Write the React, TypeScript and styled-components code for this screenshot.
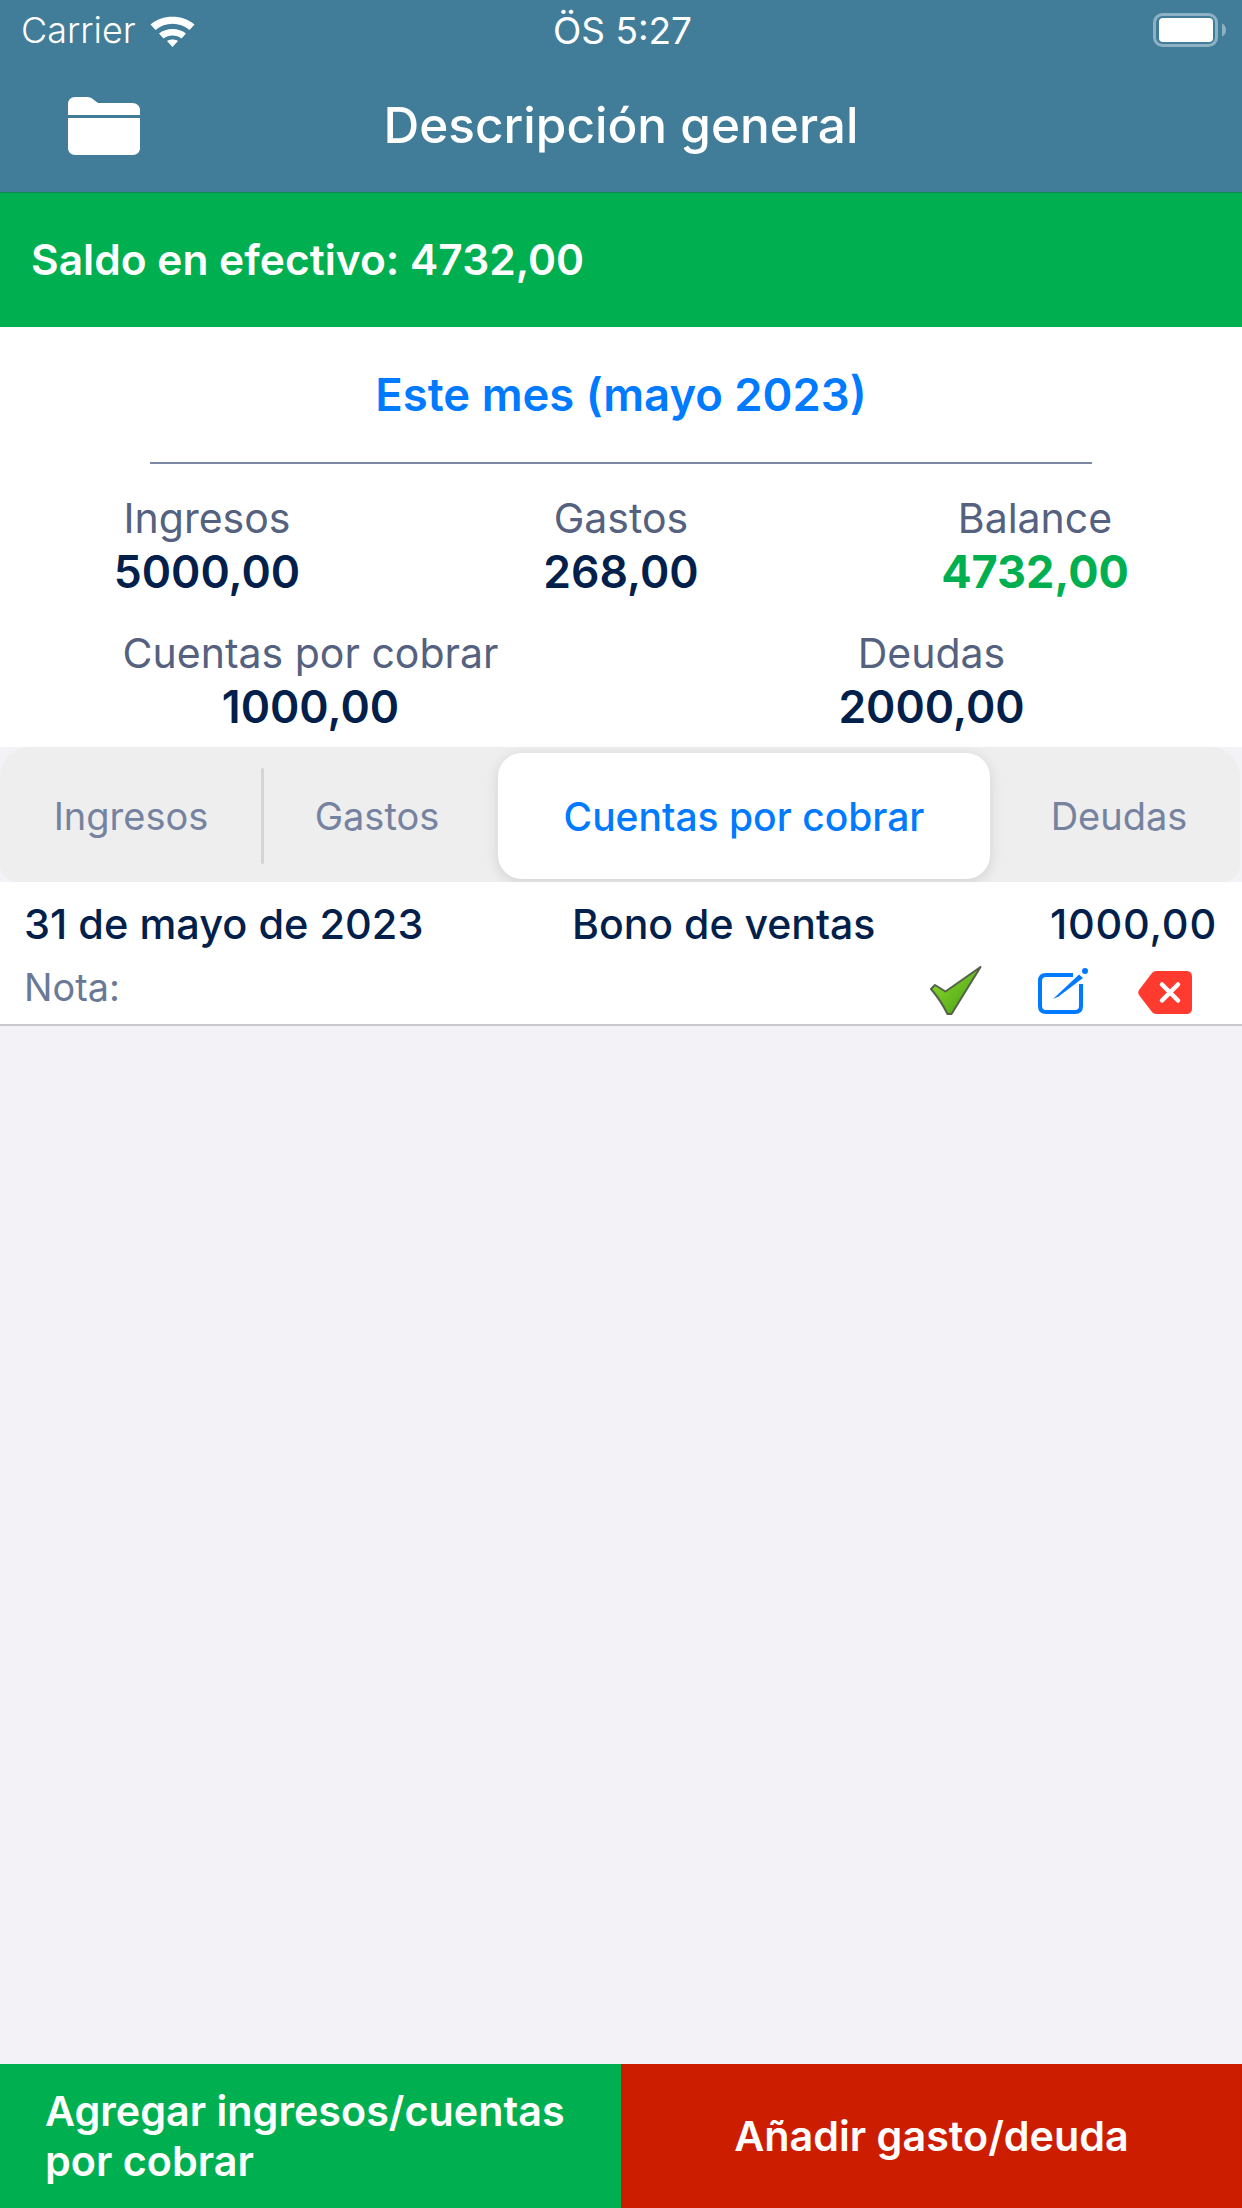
import React from 'react';
import styled, {createGlobalStyle} from 'styled-components';

const GlobalStyle = createGlobalStyle`
  html, body {
    margin: 0;
    padding: 0;
    background: #f2f2f7;
    font-family: Inter, "Noto Sans", sans-serif;
  }
  * { box-sizing: border-box; }
`;

const Screen = styled.div`
  width: 1242px;
  height: 2208px;
  display: flex;
  flex-direction: column;
  background: #f2f2f7;
`;

const Header = styled.header`
  height: 193px;
  background: #417d99;
  border-bottom: 1px solid #0e8a55;
  color: #fff;
  display: flex;
  flex-direction: column;
`;

const StatusBar = styled.div`
  height: 60px;
  padding: 0 16px 0 21px;
  display: grid;
  grid-template-columns: 1fr auto 1fr;
  align-items: center;
`;

const StatusLeft = styled.div`
  display: flex;
  align-items: center;
  gap: 14px;
  font-size: 36px;
  font-weight: 300;
`;

const StatusTime = styled.div`
  font-size: 37px;
  font-weight: 400;
  padding-right: 2px;
`;

const StatusRight = styled.div`
  display: flex;
  justify-content: flex-end;
`;

const NavBar = styled.div`
  flex: 1;
  position: relative;
  display: flex;
  align-items: center;
  justify-content: center;
  padding-bottom: 3px;
`;

const NavTitle = styled.h1`
  margin: 0;
  font-size: 49.5px;
  font-weight: 500;
`;

const FolderButton = styled.div`
  position: absolute;
  left: 68px;
  top: 37px;
  width: 72px;
  height: 58px;
  display: flex;
`;

const BalanceBar = styled.div`
  height: 134px;
  background: #00b050;
  color: #fff;
  display: flex;
  align-items: center;
  padding: 0 31px 2px;
  font-size: 42.5px;
  font-weight: 600;
`;

const Summary = styled.section`
  height: 420px;
  background: #fff;
  display: flex;
  flex-direction: column;
  align-items: center;
`;

const PeriodTitle = styled.div`
  height: 137px;
  width: 942px;
  border-bottom: 2px solid #7d88a4;
  display: flex;
  align-items: center;
  justify-content: center;
  color: #007aff;
  font-size: 45.4px;
  font-weight: 600;
`;

const StatsRow = styled.div<{$columns: string; $top: number}>`
  width: 100%;
  margin-top: ${props => props.$top}px;
  display: grid;
  grid-template-columns: ${props => props.$columns};
`;

const Stat = styled.div`
  display: flex;
  flex-direction: column;
  align-items: center;
`;

const StatLabel = styled.div`
  height: 53px;
  line-height: 48px;
  font-size: 41px;
  font-weight: 400;
  color: #54617f;
`;

const StatValue = styled.div<{$positive?: boolean}>`
  height: 50px;
  line-height: 50px;
  font-size: ${props => props.$positive ? 45 : 44.5}px;
  font-weight: ${props => props.$positive ? 700 : 600};
  color: ${props => props.$positive ? '#00b050' : '#031f4b'};
`;

const Tabs = styled.nav`
  height: 135px;
  width: 1240px;
  padding: 6px 0 3px;
  background: #eeeeee;
  border-radius: 30px 30px 18px 18px;
  display: grid;
  grid-template-columns: 262px 1px 235px 492px 1fr;
`;

const Tab = styled.div<{$active?: boolean; $inset?: string}>`
  display: flex;
  align-items: center;
  justify-content: center;
  padding: ${props => props.$inset ?? '0'};
  font-size: ${props => props.$active ? 39 : 38}px;
  font-weight: ${props => props.$active ? 500 : 400};
  color: ${props => props.$active ? '#007aff' : '#7583a0'};
  background: ${props => props.$active ? '#fff' : 'transparent'};
  border-radius: ${props => props.$active ? '24px' : '0'};
  box-shadow: ${props => props.$active ? '0 3px 14px rgba(0, 0, 0, 0.12)' : 'none'};
`;

const TabSeparator = styled.div`
  width: 3px;
  margin: 15px 0 15px -1px;
  background: #d4d4d4;
  border-radius: 2px;
`;

const EntryRow = styled.article`
  height: 144px;
  background: #fff;
  border-bottom: 2px solid #c8c8cc;
  padding: 17px 25px 0 24px;
  display: flex;
  flex-direction: column;
`;

const EntryMain = styled.div`
  display: grid;
  grid-template-columns: 548px 1fr auto;
  align-items: center;
  height: 46px;
  color: #031f4b;
  font-size: 41.5px;
  font-weight: 500;
`;

const EntryTitle = styled.div`
  font-size: 41px;
`;

const EntryAmount = styled.div`
  letter-spacing: 0.8px;
`;

const EntryFooter = styled.div`
  flex: 1;
  display: flex;
  align-items: flex-start;
  justify-content: space-between;
`;

const NoteLabel = styled.div`
  margin-top: 19px;
  font-size: 37.8px;
  color: #6a7a96;
`;

const EntryActions = styled.div`
  display: flex;
  align-items: flex-start;
  margin-top: 20px;
  padding-right: 25px;
`;

const ActionIcon = styled.div<{$gap: number; $top: number; $soft?: boolean}>`
  margin-left: ${props => props.$gap}px;
  margin-top: ${props => props.$top}px;
  display: flex;
  filter: ${props => props.$soft ? 'blur(0.7px)' : 'none'};
`;

const EmptyArea = styled.div`
  flex: 1;
`;

const BottomBar = styled.footer`
  height: 144px;
  display: grid;
  grid-template-columns: 621px 621px;
`;

const BottomButton = styled.div<{$color: string; $centered?: boolean}>`
  background: ${props => props.$color};
  color: #fff;
  font-size: 41.3px;
  font-weight: 600;
  line-height: 50px;
  display: flex;
  align-items: center;
  justify-content: ${props => props.$centered ? 'center' : 'flex-start'};
  padding: 0 45px;
`;

const WifiIcon: React.FC = () => (
  <svg width="45" height="33" viewBox="0 0 45 33">
    <path d="M0.500 10.500 C12 0 33 0 44.500 10.500 L39.500 16 C29.500 7.500 15.500 7.500 5.500 16 Z" fill="#fff" />
    <path d="M9 19.500 C16 13.500 29 13.500 36 19.500 L31.500 24.500 C26.500 20.500 18.500 20.500 13.500 24.500 Z" fill="#fff" />
    <path d="M17 27 C20 25 25 25 28 27 L22.500 33 Z" fill="#fff" />
  </svg>
);

const BatteryIcon: React.FC = () => (
  <svg width="73" height="34" viewBox="0 0 73 34">
    <rect x="1.500" y="1.500" width="62" height="31" rx="8" fill="none" stroke="#fff" strokeOpacity="0.4" strokeWidth="3" />
    <rect x="6" y="5" width="54" height="24" rx="4" fill="#fff" />
    <path d="M69 10.500 C71.500 11.500 73 14 73 17 C73 20 71.500 22.500 69 23.500 Z" fill="#fff" fillOpacity="0.4" />
  </svg>
);

const FolderIcon: React.FC = () => (
  <svg width="72" height="58" viewBox="0 0 72 58">
    <path d="M0 18 V7 C0 3 3 0 7 0 H19 C22 0 24 1 26 3 L30 6 H64 C69 6 72 9 72 13 V18 Z" fill="#fff" />
    <path d="M0 21 H72 V51 C72 55 69 58 65 58 H7 C3 58 0 55 0 51 Z" fill="#fff" />
  </svg>
);

const CheckIcon: React.FC = () => (
  <svg width="52" height="50" viewBox="0 0 52 50">
    <defs>
      <linearGradient id="checkFill" x1="0" y1="0" x2="1" y2="1">
        <stop offset="0" stopColor="#96e030" />
        <stop offset="1" stopColor="#3f9a10" />
      </linearGradient>
    </defs>
    <path d="M1 24 L5 20 L15.500 26.500 L50.500 2 C42 16 32 32 21.500 49 L17.500 49 C13 40 8 32 1 24 Z" fill="url(#checkFill)" stroke="#55604a" strokeWidth="2" strokeLinejoin="round" />
  </svg>
);

const EditIcon: React.FC = () => (
  <svg width="50" height="46" viewBox="0 0 50 46">
    <path d="M35 7 H8 C4 7 2 9 2 13 V38 C2 42 4 44 8 44 H37 C41 44 43 42 43 38 V16" fill="none" stroke="#007aff" strokeWidth="4" />
    <path d="M15 31 L41 6.500 L45 10 L20.500 28.500 Z" fill="#007aff" />
    <circle cx="47" cy="3" r="3" fill="#007aff" />
  </svg>
);

const DeleteIcon: React.FC = () => (
  <svg width="54" height="43" viewBox="0 0 54 43">
    <path d="M14 2 C15 0.700 16.500 0 18.500 0 H48 C52 0 54 2 54 6 V37 C54 41 52 43 48 43 H18.500 C16.500 43 15 42.300 14 41 L1 24 C0 22.500 0 20.500 1 19 Z" fill="#ff3b30" />
    <path d="M24 13.500 L40 29.500 M40 13.500 L24 29.500" stroke="#fff" strokeWidth="4.500" strokeLinecap="round" />
  </svg>
);

const App: React.FC = () => (
  <Screen>
    <GlobalStyle />
    <Header>
      <StatusBar>
        <StatusLeft>
          Carrier
          <WifiIcon />
        </StatusLeft>
        <StatusTime>ÖS 5:27</StatusTime>
        <StatusRight>
          <BatteryIcon />
        </StatusRight>
      </StatusBar>
      <NavBar>
        <FolderButton>
          <FolderIcon />
        </FolderButton>
        <NavTitle>Descripción general</NavTitle>
      </NavBar>
    </Header>
    <BalanceBar>Saldo en efectivo: 4732,00</BalanceBar>
    <Summary>
      <PeriodTitle>Este mes (mayo 2023)</PeriodTitle>
      <StatsRow $columns="414px 414px 414px" $top={30}>
        <Stat>
          <StatLabel>Ingresos</StatLabel>
          <StatValue>5000,00</StatValue>
        </Stat>
        <Stat>
          <StatLabel>Gastos</StatLabel>
          <StatValue>268,00</StatValue>
        </Stat>
        <Stat>
          <StatLabel>Balance</StatLabel>
          <StatValue $positive>4732,00</StatValue>
        </Stat>
      </StatsRow>
      <StatsRow $columns="621px 621px" $top={32}>
        <Stat>
          <StatLabel>Cuentas por cobrar</StatLabel>
          <StatValue>1000,00</StatValue>
        </Stat>
        <Stat>
          <StatLabel>Deudas</StatLabel>
          <StatValue>2000,00</StatValue>
        </Stat>
      </StatsRow>
    </Summary>
    <Tabs>
      <Tab>Ingresos</Tab>
      <TabSeparator />
      <Tab $inset="0 7px 0 0">Gastos</Tab>
      <Tab $active>Cuentas por cobrar</Tab>
      <Tab $inset="0 0 0 8px">Deudas</Tab>
    </Tabs>
    <EntryRow>
      <EntryMain>
        <div>31 de mayo de 2023</div>
        <EntryTitle>Bono de ventas</EntryTitle>
        <EntryAmount>1000,00</EntryAmount>
      </EntryMain>
      <EntryFooter>
        <NoteLabel>Nota:</NoteLabel>
        <EntryActions>
          <ActionIcon $gap={0} $top={0} $soft>
            <CheckIcon />
          </ActionIcon>
          <ActionIcon $gap={56} $top={3}>
            <EditIcon />
          </ActionIcon>
          <ActionIcon $gap={50} $top={6}>
            <DeleteIcon />
          </ActionIcon>
        </EntryActions>
      </EntryFooter>
    </EntryRow>
    <EmptyArea />
    <BottomBar>
      <BottomButton $color="#00b050">Agregar ingresos/cuentas por cobrar</BottomButton>
      <BottomButton $color="#cd1d00" $centered>Añadir gasto/deuda</BottomButton>
    </BottomBar>
  </Screen>
);

export default App;
